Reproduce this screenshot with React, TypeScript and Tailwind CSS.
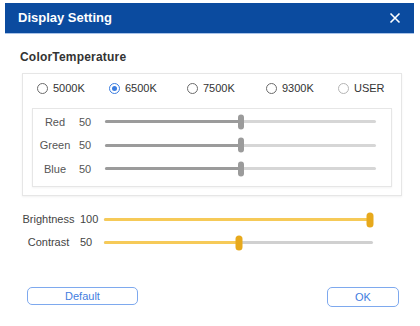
import React from "react";

const font = { fontFamily: '"Liberation Sans", Arial, sans-serif' };

function Radio({ label, checked, light }: { label: string; checked?: boolean; light?: boolean }) {
  return (
    <div className="flex items-center gap-[5px]">
      <span
        className={
          "flex h-[11px] w-[11px] items-center justify-center rounded-full border bg-white " +
          (checked ? "border-[#3b7de0]" : light ? "border-[#b5b5b5]" : "border-[#6b6b6b]")
        }
      >
        {checked && <span className="h-[5px] w-[5px] rounded-full bg-[#3b7de0]" />}
      </span>
      <span className="text-[11px] text-[#333]">{label}</span>
    </div>
  );
}

function GraySlider({ label, value, pct }: { label: string; value: number; pct: number }) {
  return (
    <div className="flex h-[23.5px] items-center">
      <span className="w-[44px] text-center text-[11px] text-[#555]">{label}</span>
      <span className="ml-[2px] w-[26px] text-[11px] text-[#555]">{value}</span>
      <div className="relative h-[3px] w-[271px] rounded-full bg-[#d6d6d6]">
        <div className="h-full rounded-full bg-[#9b9b9b]" style={{ width: `${pct}%` }} />
        <div
          className="absolute top-1/2 h-[15px] w-[6px] -translate-x-1/2 -translate-y-1/2 rounded-full bg-[#9b9b9b]"
          style={{ left: `${pct}%` }}
        />
      </div>
    </div>
  );
}

function YellowSlider({ label, value, pct }: { label: string; value: number; pct: number }) {
  return (
    <div className="flex h-[23px] items-center">
      <span className="w-[55px] text-center text-[11px] text-[#444]">{label}</span>
      <span className="ml-[4px] w-[24px] text-[11px] text-[#444]">{value}</span>
      <div className="relative h-[3px] w-[269px] rounded-full bg-[#d0d0d0]">
        <div className="h-full rounded-full bg-[#f6ca58]" style={{ width: `${pct}%` }} />
        <div
          className="absolute top-1/2 h-[15px] w-[7px] -translate-x-1/2 -translate-y-1/2 rounded-full bg-[#e7a91c]"
          style={{ left: `${pct}%` }}
        />
      </div>
    </div>
  );
}

export default function App() {
  return (
    <div className="h-[326px] w-[420px] bg-white pl-[5px] pt-[3px]" style={font}>
      <div className="w-[409px]">
        {/* title bar */}
        <div className="flex h-[31px] items-center justify-between border-b border-[#a9c3e8] bg-[#0b4b9f] pl-[13px] pr-[13px]">
          <span className="text-[13px] font-bold text-white">Display Setting</span>
          <svg width="12" height="12" viewBox="0 0 12 12">
            <path d="M1.5 1.5 L10.5 10.5 M10.5 1.5 L1.5 10.5" stroke="white" strokeWidth="1.6" />
          </svg>
        </div>

        <div className="pl-[15px] pt-[14px] text-[12px] font-bold tracking-[0.2px] text-[#333]">ColorTemperature</div>

        <div className="ml-[17px] mt-[7px] h-[123px] w-[380px] border border-[#e6e6e6] shadow-[0_1px_2px_rgba(0,0,0,0.06)]">
          <div className="flex h-[28px] items-center pl-[14px]">
            <div className="w-[72px]">
              <Radio label="5000K" />
            </div>
            <div className="w-[78px]">
              <Radio label="6500K" checked />
            </div>
            <div className="w-[79px]">
              <Radio label="7500K" />
            </div>
            <div className="w-[72px]">
              <Radio label="9300K" />
            </div>
            <Radio label="USER" light />
          </div>
          <div className="ml-[9px] mt-[6px] h-[79px] w-[360px] border border-[#e6e6e6] pt-[1px] shadow-[0_1px_2px_rgba(0,0,0,0.05)]">
            <GraySlider label="Red" value={50} pct={50} />
            <GraySlider label="Green" value={50} pct={50} />
            <GraySlider label="Blue" value={50} pct={50} />
          </div>
        </div>

        <div className="ml-[16px] mt-[12px]">
          <YellowSlider label="Brightness" value={100} pct={99} />
          <YellowSlider label="Contrast" value={50} pct={50} />
        </div>

        <div className="mt-[33px] flex items-start justify-between pl-[22px] pr-[15px]">
          <button className="h-[18px] w-[111px] rounded-[5px] border border-[#7ea9ee] text-[11px] text-[#3f7de0]">
            Default
          </button>
          <button className="h-[20px] w-[72px] rounded-[5px] border border-[#7ea9ee] text-[11px] text-[#3f7de0]">
            OK
          </button>
        </div>
      </div>
    </div>
  );
}
